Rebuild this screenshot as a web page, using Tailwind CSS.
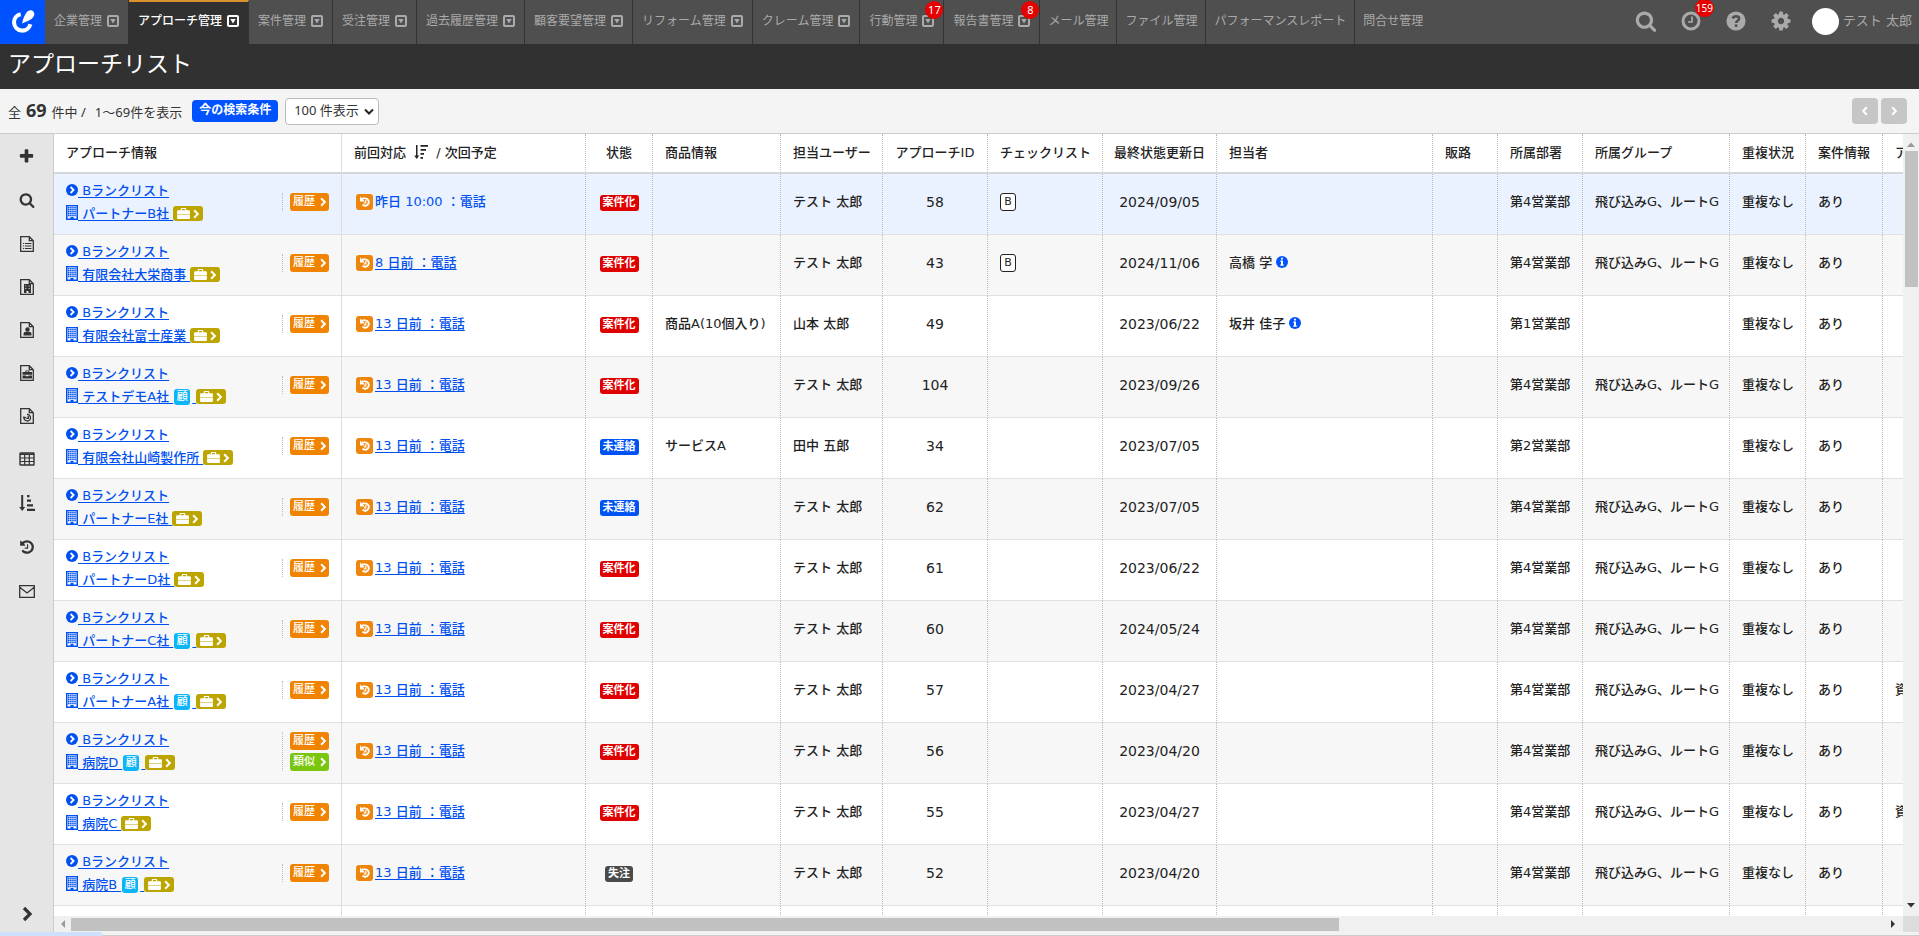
<!DOCTYPE html>
<html lang="ja">
  <head>
    <meta charset="UTF-8" />
    <meta name="viewport" content="width=device-width, initial-scale=1.0" />
    <title>アプローチリスト</title>
    <script src="https://cdn.jsdelivr.net/npm/@tailwindcss/browser@4"></script>
  </head>
  <body
    class="flex h-screen flex-col overflow-hidden bg-[#f4f4f4] font-['DejaVu_Sans','Noto_Sans_CJK_JP',sans-serif] text-[13px] leading-5 text-[#222]"
  >
    <!-- アイコン定義 -->
    <svg class="hidden" xmlns="http://www.w3.org/2000/svg">
      <symbol id="i-search" viewBox="0 0 1792 1792">
        <path d="M1216 832q0-185-131.5-316.5t-316.5-131.5-316.5 131.5-131.5 316.5 131.5 316.5 316.5 131.5 316.5-131.5 131.5-316.5zm512 832q0 52-38 90t-90 38q-54 0-90-38l-343-342q-179 124-399 124-143 0-273.5-55.5t-225-150-150-225-55.5-273.5 55.5-273.5 150-225 225-150 273.5-55.5 273.5 55.5 225 150 150 225 55.5 273.5q0 220-124 399l343 343q37 37 37 90z" />
      </symbol>
      <symbol id="i-gear" viewBox="0 0 1792 1792">
        <path d="M1152 896q0-106-75-181t-181-75-181 75-75 181 75 181 181 75 181-75 75-181zm512-109v222q0 12-8 23t-20 13l-185 28q-19 54-39 91 35 50 107 138 10 12 10 25t-9 23q-27 37-99 108t-94 71q-12 0-26-9l-138-108q-44 23-91 38-16 136-29 186-7 28-36 28h-222q-14 0-24.5-8.5t-11.5-21.5l-28-184q-49-16-90-37l-141 107q-10 9-25 9-14 0-25-11-126-114-165-168-7-10-7-23 0-12 8-23 15-21 51-66.5t54-70.5q-27-50-41-99l-183-27q-13-2-21-12.5t-8-23.5v-222q0-12 8-23t19-13l186-28q14-46 39-92-40-57-107-138-10-12-10-24 0-10 9-23 26-36 98.5-107.5t94.5-71.5q13 0 26 10l138 107q44-23 91-38 16-136 29-186 7-28 36-28h222q14 0 24.5 8.5t11.5 21.5l28 184q49 16 90 37l142-107q9-9 24-9 13 0 25 10 129 119 165 170 7 8 7 22 0 12-8 23-15 21-51 66.5t-54 70.5q26 50 41 98l183 28q13 2 21 12.5t8 23.5z" />
      </symbol>
      <symbol id="i-history" viewBox="0 0 1792 1792">
        <path d="M1664 896q0 156-61 298t-164 245-245 164-298 61q-172 0-327-72.5t-264-204.5q-7-10-6.5-22.5t8.5-20.5l137-138q10-9 25-9 16 2 23 12 73 95 179 147t225 52q104 0 198.5-40.5t163.5-109.5 109.5-163.5 40.5-198.5-40.5-198.5-109.5-163.5-163.5-109.5-198.5-40.5q-98 0-188 35.5t-160 101.5l137 138q31 30 14 69-17 40-59 40h-448q-26 0-45-19t-19-45v-448q0-42 40-59 39-17 69 14l130 129q107-101 244.5-156.5t284.5-55.5q156 0 298 61t245 164 164 245 61 298zm-640-288v448q0 14-9 23t-23 9h-320q-14 0-23-9t-9-23v-64q0-14 9-23t23-9h224v-352q0-14 9-23t23-9h64q14 0 23 9t9 23z" />
      </symbol>
      <symbol id="i-plus" viewBox="0 0 1792 1792">
        <path d="M1600 736v192q0 40-28 68t-68 28h-416v416q0 40-28 68t-68 28h-192q-40 0-68-28t-28-68v-416h-416q-40 0-68-28t-28-68v-192q0-40 28-68t68-28h416v-416q0-40 28-68t68-28h192q40 0 68 28t28 68v416h416q40 0 68 28t28 68z" />
      </symbol>
      <symbol id="i-clock" viewBox="0 0 20 20">
        <circle cx="10" cy="10" r="8" fill="none" stroke="currentColor" stroke-width="3" />
        <path d="M11 5.5V11H7" fill="none" stroke="currentColor" stroke-width="1.7" />
      </symbol>
      <symbol id="i-help" viewBox="0 0 20 20">
        <circle cx="10" cy="10" r="9.6" />
        <path d="M6.6 7.6C7.3 5.9 8.6 5.2 10 5.2c1.8 0 3.1 1 3.1 2.5 0 2-3 2-3 4.2" fill="none" stroke="#4f4f4f" stroke-width="2.5" />
        <path d="M8.8 13.4h2.6v2.5H8.8z" fill="#4f4f4f" />
      </symbol>
      <symbol id="i-right" viewBox="0 0 12 16">
        <path d="M3 2l6 6-6 6" fill="none" stroke="currentColor" stroke-width="3.2" />
      </symbol>
      <symbol id="i-left" viewBox="0 0 12 16">
        <path d="M9 2L3 8l6 6" fill="none" stroke="currentColor" stroke-width="3.2" />
      </symbol>
      <symbol id="i-drop" viewBox="0 0 12 12">
        <rect x="1" y="1" width="10" height="10" rx="1" fill="none" stroke="currentColor" stroke-width="2" />
        <path d="M3.300 4h5.400L6 8.500z" />
      </symbol>
      <symbol id="i-circle-right" viewBox="0 0 12 12">
        <circle cx="6" cy="6" r="6" />
        <path d="M4.6 3l3 3-3 3" fill="none" stroke="#fff" stroke-width="1.8" />
      </symbol>
      <symbol id="i-building" viewBox="0 0 12 15">
        <path fill-rule="evenodd" d="M0 0h12v15H0zM1.500 1.200v12.300h3v-1.500h3v1.500h3V1.200z" />
        <path d="M2 2.500h8M2 4.500h8M2 6.500h8M2 8.500h8M2 10.500h8" fill="none" stroke="currentColor" stroke-width="1.500" stroke-dasharray="1.500 .6" />
      </symbol>
      <symbol id="i-briefcase" viewBox="0 0 14 12">
        <path fill-rule="evenodd" d="M4 2.500V1q0-1 1-1h4q1 0 1 1v1.500h3q1 0 1 1V7H0V3.500q0-1 1-1zM5.200 2.500h3.600V1.200H5.200z" />
        <path d="M0 7.700h14V11q0 1-1 1H1q-1 0-1-1z" />
      </symbol>
      <symbol id="i-back" viewBox="0 0 12 12">
        <path d="M3 2.400h3.500a3.700 3.700 0 1 1-3 6.300" fill="none" stroke="currentColor" stroke-width="1.900" />
        <path d="M1 .5v5h5z" />
        <path d="M6.800 4v2.800H4.800" fill="none" stroke="currentColor" stroke-width="1.200" />
      </symbol>
      <symbol id="i-info" viewBox="0 0 12 12">
        <circle cx="6" cy="6" r="6" />
        <path d="M5 1.800h2v1.700H5zM4.300 4.500H7v4h.8v1.300H4.300V8.500H5V5.700h-.7z" fill="#fff" />
      </symbol>
      <symbol id="i-doc" viewBox="0 0 14 16">
        <path d="M.7.7h8.600l4 4v10.600H.7zM9.300.7v4h4" fill="none" stroke="currentColor" stroke-width="1.300" />
      </symbol>
      <symbol id="i-doc-list" viewBox="0 0 14 16">
        <use href="#i-doc" />
        <path d="M3 7.500h1.200M5 7.500h6.500M3 10h1.200M5 10h6.500M3 12.500h1.200M5 12.500h6.500" stroke="currentColor" stroke-width="1.200" />
      </symbol>
      <symbol id="i-doc-building" viewBox="0 0 14 16">
        <use href="#i-doc" />
        <path fill-rule="evenodd" d="M4 5h7v9H8.500v-2h-2v2H4zM5.300 6.500v1h1v-1zM8.700 6.500v1h1v-1zM5.300 9v1h1V9zM8.700 9v1h1V9z" />
      </symbol>
      <symbol id="i-doc-user" viewBox="0 0 14 16">
        <use href="#i-doc" />
        <circle cx="7.500" cy="7.500" r="2.200" />
        <path d="M3.500 13.500v-1.500q0-2.300 2.300-2.300h3.400q2.300 0 2.300 2.300v1.500z" />
      </symbol>
      <symbol id="i-doc-case" viewBox="0 0 14 16">
        <use href="#i-doc" />
        <path fill-rule="evenodd" d="M5.300 7V5.500h4V7H12v2.700H2.500V7zM6.300 7h2v-.7h-2zM2.500 10.500H6v.8h2.500v-.8H12v3H2.500z" />
      </symbol>
      <symbol id="i-doc-history" viewBox="0 0 14 16">
        <use href="#i-doc" />
        <path d="M7 6.500h1a3.300 3.300 0 1 1-3.800 4.500M8.300 8v2.300H6.300" fill="none" stroke="currentColor" stroke-width="1.300" />
        <path d="M2.800 8.500l3.800.6-2.800 2.600z" />
      </symbol>
      <symbol id="i-table" viewBox="0 0 16 14">
        <path d="M1.500 1h13q.5 0 .5.500v11q0 .5-.5.5h-13q-.5 0-.5-.5v-11q0-.5.5-.5z" fill="none" stroke="currentColor" stroke-width="1.400" />
        <path d="M1 1.500h14v1.500H1z" />
        <path d="M1 6h14M1 9.500h14M5.700 3v10M10.300 3v10" fill="none" stroke="currentColor" stroke-width="1.200" />
      </symbol>
      <symbol id="i-sort-asc" viewBox="0 0 16 16">
        <path d="M2.200 0h2v12h2L3.200 16 .2 12h2zM8 0h2.500v2.200H8zM8 4.600h4v2.200H8zM8 9.200h6v2.200H8zM8 13.800h8V16H8z" />
      </symbol>
      <symbol id="i-sort-desc" viewBox="0 0 14 14">
        <path d="M2 0h1.500v10.500h1.700L2.700 14 .2 10.500H2zM6.500 0H14v1.800H6.500zM6.500 4h5.500v1.800H6.500zM6.500 8H10v1.800H6.500zM6.500 12H9v1.800H6.500z" />
      </symbol>
      <symbol id="i-mail" viewBox="0 0 16 13">
        <path d="M.7.7h14.600v11.600H.7zM1 2.500l7 5.500 7-5.500" fill="none" stroke="currentColor" stroke-width="1.300" />
      </symbol>
      <symbol id="i-logo" viewBox="0 0 26 26">
        <path d="M10.500 4.500A9 9 0 1 0 21 15.500" fill="none" stroke="currentColor" stroke-width="4.400" />
        <path d="M12 14.500C13 9.500 15 4.500 17.500 2 19.500 0 22.500-.2 24 1.300 25.800 3.200 25.500 6 23.800 8 21.500 10.500 17 12.500 12 14.500z" />
      </symbol>
    </svg>

    <header class="flex h-11 shrink-0 bg-[#4f4f4f] text-xs text-[#aaa]">
      <a href="#" aria-label="ホーム" class="flex w-[45px] items-center justify-center bg-[#0052ff] text-white">
        <svg class="size-6" fill="currentColor"><use href="#i-logo" /></svg>
      </a>
      <nav id="nav" class="flex flex-1"></nav>
      <div class="flex items-center pb-0.5 text-[13px]">
        <button type="button" aria-label="検索" class="w-[45px]"><svg class="mx-auto size-[22px]" fill="currentColor"><use href="#i-search" /></svg></button>
        <button type="button" aria-label="通知" class="relative w-[45px]">
          <svg class="mx-auto size-5" fill="currentColor"><use href="#i-clock" /></svg>
          <span class="absolute -top-3 right-0 rounded-full bg-[#e60000] px-px font-['Noto_Sans'] text-[10px] leading-[18px] text-white">159</span>
        </button>
        <button type="button" aria-label="ヘルプ" class="w-[45px]"><svg class="mx-auto size-5" fill="currentColor"><use href="#i-help" /></svg></button>
        <button type="button" aria-label="設定" class="w-[45px]"><svg class="mx-auto size-[22px]" fill="currentColor"><use href="#i-gear" /></svg></button>
        <a href="#" class="ml-2 flex items-center gap-1 pr-[7px]">
          <span class="size-[27px] rounded-full bg-white"></span>テスト 太郎
        </a>
      </div>
    </header>

    <h1 class="h-[45px] shrink-0 bg-[#313131] pl-2 text-[23px] leading-10 text-white">アプローチリスト</h1>

    <div class="flex h-11 shrink-0 items-center pl-2 pr-3 text-[#333]">
      <p class="flex items-baseline gap-[5px] font-['Noto_Sans','Noto_Sans_CJK_JP',sans-serif]">
        <span>全</span><b class="text-lg leading-5">69</b><span>件中 /</span><span class="ml-1">1〜69件を表示</span>
      </p>
      <button type="button" class="ml-2.5 h-[22px] rounded-sm bg-[#0052ff] px-[7px] pb-0.5 text-xs leading-5 font-bold text-white">今の検索条件</button>
      <div class="relative ml-[7px]">
        <select aria-label="表示件数" class="h-[27px] w-[94px] appearance-none rounded-sm border border-[#bbb] bg-white pb-0.5 pl-2 font-['Noto_Sans','Noto_Sans_CJK_JP',sans-serif] text-[13px]">
          <option>100 件表示</option>
        </select>
        <svg class="pointer-events-none absolute top-2.5 right-1 h-2 w-3" viewBox="0 0 12 8" fill="none" stroke="#222" stroke-width="2"><path d="M2 1.500l4 4 4-4" /></svg>
      </div>
      <div class="ml-auto flex gap-[3px] text-white">
        <button type="button" aria-label="前へ" class="flex h-[26px] w-[26px] items-center justify-center rounded-sm bg-[#c6c6c6]"><svg class="h-2.5 w-2"><use href="#i-left" /></svg></button>
        <button type="button" aria-label="次へ" class="flex h-[26px] w-[26px] items-center justify-center rounded-sm bg-[#c6c6c6]"><svg class="h-2.5 w-2"><use href="#i-right" /></svg></button>
      </div>
    </div>

    <main class="flex min-h-0 flex-1 border-t border-[#ccc]">
      <aside class="flex w-[54px] shrink-0 flex-col border-r border-[#ccc] bg-[#e5e5e5] text-[#333]">
        <button type="button" aria-label="新規" class="h-11"><svg class="mx-auto size-[17px]" fill="currentColor"><use href="#i-plus" /></svg></button>
        <button type="button" aria-label="検索" class="h-11"><svg class="mx-auto size-4" fill="currentColor"><use href="#i-search" /></svg></button>
        <button type="button" aria-label="リスト" class="h-[43px]"><svg class="mx-auto h-4 w-3.5" fill="currentColor"><use href="#i-doc-list" /></svg></button>
        <button type="button" aria-label="企業" class="h-[43px]"><svg class="mx-auto h-4 w-3.5" fill="currentColor"><use href="#i-doc-building" /></svg></button>
        <button type="button" aria-label="担当者" class="h-[43px]"><svg class="mx-auto h-4 w-3.5" fill="currentColor"><use href="#i-doc-user" /></svg></button>
        <button type="button" aria-label="案件" class="h-[43px]"><svg class="mx-auto h-4 w-3.5" fill="currentColor"><use href="#i-doc-case" /></svg></button>
        <button type="button" aria-label="履歴一覧" class="h-[43px]"><svg class="mx-auto h-4 w-3.5" fill="currentColor"><use href="#i-doc-history" /></svg></button>
        <button type="button" aria-label="表示項目" class="h-11"><svg class="mx-auto h-3.5 w-4" fill="currentColor"><use href="#i-table" /></svg></button>
        <button type="button" aria-label="並び替え" class="h-11"><svg class="mx-auto size-4" fill="currentColor"><use href="#i-sort-asc" /></svg></button>
        <button type="button" aria-label="履歴" class="h-11"><svg class="mx-auto size-4" fill="currentColor"><use href="#i-history" /></svg></button>
        <button type="button" aria-label="メール" class="h-11"><svg class="mx-auto h-[13px] w-4" fill="currentColor"><use href="#i-mail" /></svg></button>
        <button type="button" aria-label="メニューを開く" class="mt-auto mb-2.5"><svg class="mx-auto h-4 w-3"><use href="#i-right" /></svg></button>
      </aside>

      <div class="flex min-w-0 flex-1 flex-col">
        <div class="flex min-h-0 flex-1">
          <div class="min-w-0 flex-1 overflow-hidden bg-white">
            <table class="w-[1900px] table-fixed border-separate border-spacing-0 font-medium whitespace-nowrap">
              <colgroup>
                <col class="w-[288px]" /><col class="w-[244px]" /><col class="w-[67px]" /><col class="w-32" />
                <col class="w-[102px]" /><col class="w-[105px]" /><col class="w-[115px]" /><col class="w-[114px]" />
                <col class="w-[216px]" /><col class="w-[65px]" /><col class="w-[85px]" /><col class="w-[147px]" />
                <col class="w-[76px]" /><col class="w-[77px]" /><col />
              </colgroup>
              <thead>
                <tr class="h-10 text-left *:border-r *:border-b-2 *:border-dotted *:border-r-[#bbb] *:border-b-[#d3d6da] *:[border-bottom-style:solid] *:py-0 *:pr-0 *:pl-3 *:font-medium">
                  <th class="border-r-[#ddd]! [border-right-style:solid]!">アプローチ情報</th>
                  <th>前回対応 <svg class="mx-1 inline size-3.5 align-[-2px]" fill="currentColor"><use href="#i-sort-desc" /></svg> / 次回予定</th>
                  <th class="pl-0! text-center">状態</th>
                  <th>商品情報</th>
                  <th>担当ユーザー</th>
                  <th class="pl-0! text-center">アプローチID</th>
                  <th>チェックリスト</th>
                  <th class="pl-0! text-center">最終状態更新日</th>
                  <th>担当者</th>
                  <th>販路</th>
                  <th>所属部署</th>
                  <th>所属グループ</th>
                  <th>重複状況</th>
                  <th>案件情報</th>
                  <th>アポ</th>
                </tr>
              </thead>
              <tbody id="rows"></tbody>
            </table>
          </div>
          <!-- 縦スクロールバー -->
          <div class="flex w-4 shrink-0 flex-col items-center bg-[#f0f0f0] py-1.5" aria-hidden="true">
            <svg class="h-[9px] w-2" viewBox="0 0 8 9" fill="#999"><path d="M0 7h8L4 2.500z" /></svg>
            <div class="mt-0.5 h-[136px] w-[13px] bg-[#c1c1c1]"></div>
            <svg class="mt-auto h-[9px] w-2" viewBox="0 0 8 9" fill="#333"><path d="M0 2h8L4 6.500z" /></svg>
          </div>
        </div>
        <!-- 横スクロールバー -->
        <div class="flex h-4 shrink-0 items-center bg-[#f0f0f0]" aria-hidden="true">
          <svg class="ml-1 h-2 w-[13px]" viewBox="0 0 13 8" fill="#999"><path d="M7 0v8L3 4z" /></svg>
          <div class="h-[13px] w-[68%] bg-[#c1c1c1]"></div>
          <svg class="mr-2 ml-auto h-2 w-1" viewBox="0 0 4 8" fill="#333"><path d="M0 0v8l4-4z" /></svg>
          <div class="h-4 w-4 bg-[#dcdcdc]"></div>
        </div>
      </div>
    </main>

    <footer class="h-1 shrink-0 border-b border-[#ccc] bg-[#f2f2f2]">
      <div class="h-1 w-[103px] rounded-tr-sm bg-[#cfe0fc]"></div>
    </footer>

    <script>
      const menus = [
        ["企業管理", true],
        ["アプローチ管理", true, "", true],
        ["案件管理", true],
        ["受注管理", true],
        ["過去履歴管理", true],
        ["顧客要望管理", true],
        ["リフォーム管理", true],
        ["クレーム管理", true],
        ["行動管理", true, "17"],
        ["報告書管理", true, "8"],
        ["メール管理", false],
        ["ファイル管理", false],
        ["パフォーマンスレポート", false],
        ["問合せ管理", false],
      ];

      document.getElementById("nav").innerHTML = menus
        .map(([name, drop, badge, active], i) => {
          const state = active
            ? "border-t-2 border-t-[#d9912e] bg-[#313131] font-medium text-white"
            : "pt-0.5";
          const line = i < menus.length - 1 ? "border-r border-r-[#333]" : "";
          const pad = drop ? "gap-[5px] px-[9px]" : "px-2";
          return `<a href="#" class="relative flex items-center whitespace-nowrap pb-1 ${pad} ${state} ${line}">${name}
            ${drop ? '<svg class="size-3 shrink-0" fill="currentColor"><use href="#i-drop" /></svg>' : ""}
            ${badge ? `<span class="absolute top-px right-0 size-[18px] rounded-full bg-[#e60000] text-center font-['Noto_Sans'] text-[11px] leading-[18px] text-white">${badge}</span>` : ""}
          </a>`;
        })
        .join("");

      const g4 = ["第4営業部", "飛び込みG、ルートG"];
      // 会社名, 顧客, 類似, 前回対応, 状態, 商品, ユーザー, ID, チェック, 更新日, 担当者, 部署/グループ, アポ
      const data = [
        ["パートナーB社", 0, 0, "昨日 10:00 ：電話", "案件化", "", "テスト 太郎", 58, "B", "2024/09/05", "", g4, ""],
        ["有限会社大栄商事", 0, 0, "8 日前 ：電話", "案件化", "", "テスト 太郎", 43, "B", "2024/11/06", "高橋 学", g4, ""],
        ["有限会社富士産業", 0, 0, "13 日前 ：電話", "案件化", "商品A(10個入り)", "山本 太郎", 49, "", "2023/06/22", "坂井 佳子", ["第1営業部", ""], ""],
        ["テストデモA社", 1, 0, "13 日前 ：電話", "案件化", "", "テスト 太郎", 104, "", "2023/09/26", "", g4, ""],
        ["有限会社山崎製作所", 0, 0, "13 日前 ：電話", "未連絡", "サービスA", "田中 五郎", 34, "", "2023/07/05", "", ["第2営業部", ""], ""],
        ["パートナーE社", 0, 0, "13 日前 ：電話", "未連絡", "", "テスト 太郎", 62, "", "2023/07/05", "", g4, ""],
        ["パートナーD社", 0, 0, "13 日前 ：電話", "案件化", "", "テスト 太郎", 61, "", "2023/06/22", "", g4, ""],
        ["パートナーC社", 1, 0, "13 日前 ：電話", "案件化", "", "テスト 太郎", 60, "", "2024/05/24", "", g4, ""],
        ["パートナーA社", 1, 0, "13 日前 ：電話", "案件化", "", "テスト 太郎", 57, "", "2023/04/27", "", g4, "資料"],
        ["病院D", 1, 1, "13 日前 ：電話", "案件化", "", "テスト 太郎", 56, "", "2023/04/20", "", g4, ""],
        ["病院C", 0, 0, "13 日前 ：電話", "案件化", "", "テスト 太郎", 55, "", "2023/04/27", "", g4, "資料"],
        ["病院B", 1, 0, "13 日前 ：電話", "失注", "", "テスト 太郎", 52, "", "2023/04/20", "", g4, ""],
        ["病院A", 0, 0, "13 日前 ：電話", "案件化", "", "テスト 太郎", 51, "", "2023/04/20", "", g4, ""],
      ];

      const statusColor = {
        案件化: "bg-[#e00000]",
        未連絡: "bg-[#0052f5]",
        失注: "bg-[#4a4a4a]",
      };

      function sideButton(label, color) {
        return `<button type="button" class="flex h-[18px] w-[39px] items-center justify-between rounded-[3px] pr-0.5 pl-[3px] text-[11px] leading-4 font-medium text-white ${color}">${label}<svg class="h-2.5 w-2"><use href="#i-right" /></svg></button>`;
      }

      document.getElementById("rows").innerHTML = data
        .map((d, i) => {
          const [company, customer, similar, last, status, item, user, id, check, date, person, group, appo] = d;
          const bg = i === 0 ? "bg-[#ebf2ff]" : i % 2 ? "bg-[#f7f7f7]" : "bg-white";
          return `<tr class="h-[61px] ${bg} *:border-r *:border-b *:border-dotted *:border-r-[#bbb] *:border-b-[#e0e0e0] *:[border-bottom-style:solid] *:pt-0 *:pr-0 *:pb-1 *:pl-3">
            <td class="border-r-[#ddd]! [border-right-style:solid]!">
              <div class="flex items-center">
                <div class="flex-1 leading-[23px] text-[#0050f0]">
                  <a href="#" class="block underline underline-offset-2"><svg class="inline size-3 align-[-1px]" fill="currentColor"><use href="#i-circle-right" /></svg> Bランクリスト</a>
                  <div class="flex items-center">
                    <a href="#" class="underline underline-offset-2"><svg class="inline h-[15px] w-3 align-[-2px]" fill="currentColor"><use href="#i-building" /></svg> ${company}&nbsp;</a>
                    ${customer ? '<span class="ml-px size-4 rounded-[3px] bg-[#0cb4f8] text-center text-[11px] leading-[15px] font-medium text-white">顧</span><a href="#" aria-label="案件" class="ml-0.5 underline underline-offset-2">&nbsp;</a>' : ""}
                    <button type="button" aria-label="案件一覧" class="flex h-[15px] w-[30px] items-center justify-center gap-0.5 rounded-[3px] bg-[#bca500] text-white">
                      <svg class="h-[11px] w-[13px]" fill="currentColor"><use href="#i-briefcase" /></svg><svg class="h-2.5 w-2"><use href="#i-right" /></svg>
                    </button>
                  </div>
                </div>
                <div class="mr-3 flex flex-col gap-[3px] border-l border-dotted border-[#bbb] pl-[7px]">
                  ${sideButton("履歴", "bg-[#f08300]")}${similar ? sideButton("類似", "bg-[#7ac60f]") : ""}
                </div>
              </div>
            </td>
            <td>
              <div class="flex items-center gap-0.5 pl-0.5">
                <span class="flex h-4 w-[17px] items-center justify-center rounded-[3px] bg-[#ee850c] text-white"><svg class="size-3" fill="currentColor"><use href="#i-back" /></svg></span>
                <a href="#" class="text-[#0050f0] ${i ? "underline underline-offset-2" : ""}">${last}</a>
              </div>
            </td>
            <td class="pl-0! text-center"><span class="inline-block h-4 rounded-[3px] px-[3px] align-middle text-[11px] leading-[15px] font-bold text-white ${statusColor[status]}">${status}</span></td>
            <td>${item}</td>
            <td>${user}</td>
            <td class="pl-0! text-center text-sm">${id}</td>
            <td>${check ? `<span class="block h-[18px] w-4 rounded-[3px] border border-[#222] bg-white text-center text-[11px] leading-[15px]">${check}</span>` : ""}</td>
            <td class="pl-0! text-center text-sm">${date}</td>
            <td>${person ? `${person} <svg class="inline size-3 align-[-1px] text-[#0052ff]" fill="currentColor"><use href="#i-info" /></svg>` : ""}</td>
            <td></td>
            <td>${group[0]}</td>
            <td>${group[1]}</td>
            <td>重複なし</td>
            <td>あり</td>
            <td>${appo}</td>
          </tr>`;
        })
        .join("");
    </script>
  </body>
</html>
